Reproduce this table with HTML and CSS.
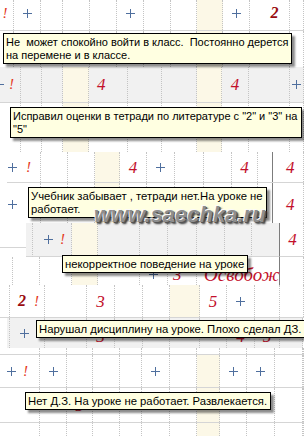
FILE: index.html
```html
<!DOCTYPE html>
<html>
<head>
<meta charset="utf-8">
<link rel="stylesheet" href="styles.css">
</head>
<body>
<div class="page">
  <!-- strip A -->
  <div class="row ra h31 bb up">
    <div class="c"><i class="ex mr3">!</i></div>
    <div class="c"><i class="pl"></i></div>
    <div class="c"></div><div class="c"></div><div class="c"></div>
    <div class="c"><i class="pl"></i></div>
    <div class="c"></div><div class="c"></div>
    <div class="c cr"></div>
    <div class="c"><i class="pl"></i></div>
    <div class="c"><b class="g2 ml10">2</b></div>
    <div class="c"></div>
  </div>
  <div class="row ra h36">
    <div class="c"></div><div class="c"></div><div class="c"></div><div class="c"></div>
    <div class="c"></div><div class="c"></div><div class="c"></div><div class="c"></div>
    <div class="c cr"></div><div class="c"></div><div class="c"></div><div class="c"></div>
  </div>

  <!-- strip B -->
  <div class="row rb h36 bb gy">
    <div class="c l"><i class="pl mln5"></i><i class="ex ml5">!</i></div>
    <div class="c"></div><div class="c"></div>
    <div class="c cr"></div>
    <div class="c l"><b class="g ml8">4</b></div>
    <div class="c"></div><div class="c"></div>
    <div class="c cr"></div>
    <div class="c"><b class="g">4</b></div>
    <div class="c"></div>
    <div class="c l"><i class="pl ml2"></i></div>
  </div>
  <div class="row rb h49">
    <div class="c"></div><div class="c"></div><div class="c"></div>
    <div class="c cr"></div>
    <div class="c"></div><div class="c"></div><div class="c"></div>
    <div class="c cr"></div>
    <div class="c"></div><div class="c"></div><div class="c"></div>
  </div>

  <!-- strip C -->
  <div class="sc">
    <div class="row rc h31 bb">
      <div class="c l"><i class="pl ml1"></i><i class="ex ml9">!</i></div>
      <div class="c"></div><div class="c"></div>
      <div class="c cr"></div>
      <div class="c"><b class="g">4</b></div>
      <div class="c"><i class="pl"></i></div>
      <div class="c"></div><div class="c"></div>
      <div class="c"><b class="g">4</b></div>
      <div class="c dk"></div>
      <div class="c l"><b class="g ml13">4</b></div>
    </div>
    <div class="row rc h40 dn">
      <div class="c l"><i class="pl ml1"></i></div>
      <div class="c"></div><div class="c"></div>
      <div class="c cr"></div>
      <div class="c"></div><div class="c"></div><div class="c"></div>
      <div class="c"></div><div class="c"></div>
      <div class="c dk"></div>
      <div class="c l"><b class="g ml13">4</b></div>
    </div>
  </div>

  <!-- strip D -->
  <div class="row rd1 h34">
    <div class="c lf"></div>
    <div class="c gy cb"></div>
    <div class="c gy cb"><i class="pl ml5"></i><i class="ex ml7">!</i></div>
    <div class="c cr cb"></div>
    <div class="c gy cb"></div>
    <div class="c gy cb"></div>
    <div class="c gy cb"></div>
    <div class="c gy cb"></div>
    <div class="c gy cb"></div>
    <div class="c gy cb dk"></div>
    <div class="c cb"><b class="g ml2">4</b></div>
  </div>
  <div class="row rd2 h28 dn2">
    <div class="c"></div><div class="c"></div><div class="c"></div>
    <div class="c cr"></div>
    <div class="c"></div>
    <div class="c"><i class="pl"></i></div>
    <div class="c l"><b class="g ml5">3</b></div>
    <div class="c l dk"><span class="os">Освобож</span></div>
    <div class="c"></div>
  </div>

  <!-- strip E -->
  <div class="row re h33 bb">
    <div class="c"></div>
    <div class="c l"><b class="g2 ml8">2</b><i class="ex ml8">!</i></div>
    <div class="c"></div>
    <div class="c"><b class="g">3</b></div>
    <div class="c"></div><div class="c"></div>
    <div class="c cr"></div>
    <div class="c"><b class="g">5</b></div>
    <div class="c"><i class="pl"></i></div>
    <div class="c"></div><div class="c"></div>
  </div>
  <div class="row re2 h30 gy">
    <div class="c"></div>
    <div class="c l"><i class="pl ml10"></i></div>
    <div class="c"></div>
    <div class="c dn3"><b class="g">3</b></div>
    <div class="c"></div><div class="c"></div><div class="c"></div>
    <div class="c"></div>
    <div class="c dn3"><b class="g">4</b></div>
    <div class="c dn3"><b class="g">5</b></div>
    <div class="c"></div>
  </div>

  <!-- strip F -->
  <div class="row rf h7 bb">
    <div class="c"></div><div class="c"></div><div class="c"></div><div class="c"></div>
    <div class="c"></div><div class="c"></div><div class="c"></div><div class="c"></div>
    <div class="c"></div><div class="c"></div><div class="c"></div><div class="c"></div>
  </div>
  <div class="row rf h33 bb">
    <div class="c l"><i class="pl ml7"></i><i class="ex ml7">!</i></div>
    <div class="c"><i class="pl"></i></div>
    <div class="c"></div><div class="c"></div><div class="c"></div>
    <div class="c"><i class="pl"></i></div>
    <div class="c"></div>
    <div class="c cr"></div>
    <div class="c"><i class="pl"></i></div>
    <div class="c"><i class="pl"></i></div>
    <div class="c"></div><div class="c"></div>
  </div>
  <div class="row rf h35 bb">
    <div class="c"></div>
    <div class="c"><i class="pl"></i></div>
    <div class="c"><b class="g">5</b></div>
    <div class="c"></div><div class="c"></div><div class="c"></div><div class="c"></div>
    <div class="c cr"></div>
    <div class="c"></div>
    <div class="c"><i class="pl"></i></div>
    <div class="c"></div><div class="c"></div>
  </div>
  <div class="row rf h13">
    <div class="c"></div><div class="c"></div><div class="c"></div><div class="c"></div>
    <div class="c"></div><div class="c"></div><div class="c"></div><div class="c cr"></div>
    <div class="c"></div><div class="c"></div><div class="c"></div><div class="c"></div>
  </div>

  <div class="tip t1">Не&nbsp; может спокойно войти в класс.&nbsp; Постоянно дерется<br>на перемене и в классе.</div>
  <div class="tip t2">Исправил оценки в тетради по литературе с "2" и "3" на<br>"5"</div>
  <div class="tip t3">Учебник забывает , тетради нет.На уроке не<br>работает.</div>
  <div class="tip t4">некорректное поведение на уроке</div>
  <div class="tip t5">Нарушал дисциплину на уроке. Плохо сделал ДЗ.</div>
  <div class="tip t6">Нет Д.З. На уроке не работает. Развлекается.</div>

  <div class="wm">www.saechka.ru</div>
</div>
</body>
</html>
```

FILE: styles.css
```css
html, body { margin: 0; padding: 0; overflow: hidden; background: #fff; }
.page {
  position: relative;
  width: 304px;
  height: 436px;
  overflow: hidden;
  background: #fff;
  font-family: "Liberation Sans", Arial, sans-serif;
}
.row { display: grid; box-sizing: border-box; }
.h7 { height: 7px; } .h13 { height: 13px; } .h28 { height: 28px; } .h30 { height: 30px; }
.h31 { height: 31px; } .h33 { height: 33px; } .h34 { height: 34px; } .h35 { height: 35px; }
.h36 { height: 36px; } .h40 { height: 40px; } .h49 { height: 49px; }
.bb { border-bottom: 1px solid #d5d5d5; }
.gy { background: #f1f1f1; }

.ra { grid-template-columns: 14px 27px 22px 27px 27px 27px 27px 26px 26px 27px 40px 14px; }
.rb { grid-template-columns: 21px 21px 21px 26px 39px 34px 35px 25px 27px 41px 14px; }
.sc { margin-left: 7px; }
.rc { grid-template-columns: 34px 27px 27px 25px 27px 28px 29px 28px 26px 15px 31px; }
.rd1 { grid-template-columns: 26px 7px 39px 26px 42px 28px 29px 28px 27px 28px 24px; }
.rd2 { grid-template-columns: 13px 27px 32px 26px 42px 28px 29px 83px 24px; }
.re { grid-template-columns: 10px 35px 42px 28px 28px 27px 30px 27px 28px 25px 24px; }
.re2 { margin: 0 1px 0 7px; grid-template-columns: 3px 35px 42px 28px 28px 27px 30px 27px 28px 25px 23px; }
.rf { grid-template-columns: 40px 27px 26px 27px 22px 28px 27px 23px 27px 28px 28px 1px; }

.c {
  display: flex;
  align-items: center;
  justify-content: center;
  box-sizing: border-box;
  min-width: 0;
  border-right: 1px dotted #c4c4c4;
  white-space: nowrap;
}
.c.l { justify-content: flex-start; }
.c.dk { border-right: 1px solid #7c7c7c; }
.cr { background: #fcf8e7; }
.cb { border-bottom: 1px solid #d5d5d5; }
.lf {
  border-right: none;
  background: linear-gradient(#d5d5d5, #d5d5d5) 0 24px / 100% 1px no-repeat, #fff;
}
.up .c { padding-bottom: 4px; }
.dn .c { padding-top: 2px; }
.dn2 .c { padding-top: 7px; }
.dn3 { padding-top: 6px; }

.pl {
  display: inline-block;
  flex: none;
  width: 9px;
  height: 9px;
  background:
    linear-gradient(#4f6f9e, #4f6f9e) 4px 0 / 1px 9px no-repeat,
    linear-gradient(#4f6f9e, #4f6f9e) 0 4px / 9px 1px no-repeat;
}
.g { font: italic 17px/1 "Liberation Serif", serif; color: #c3102b; }
.g2 { font: bold italic 16px/1 "Liberation Serif", serif; color: #9a0c10; }
.ex { font: italic 15px/1 "Liberation Serif", serif; color: #e4381a; }
.os { font: italic 19px/1 "Liberation Serif", serif; color: #c3102b; margin-left: 7px; }

.ml1 { margin-left: 1px; } .ml2 { margin-left: 2px; } .ml5 { margin-left: 5px; }
.ml7 { margin-left: 7px; } .ml8 { margin-left: 8px; } .ml9 { margin-left: 9px; }
.ml10 { margin-left: 10px; } .ml13 { margin-left: 13px; } .mln5 { margin-left: -5px; }
.mr3 { margin-right: 3px; }

.wm {
  position: absolute;
  left: 94px;
  top: 203px;
  font: bold italic 22px/24px "Liberation Sans", Arial, sans-serif;
  color: #8e8e8e;
  text-shadow: -1px -1px 0 #fafafa, 1px 1px 0 #555, 2px 2px 2px #333;
}

.tip {
  position: absolute;
  background: #ffffe1;
  border: 1px solid #000;
  box-shadow: 3px 3px 2px rgba(0, 0, 0, 0.45);
  font: 11.3px/13px "Liberation Sans", Arial, sans-serif;
  color: #000;
  padding: 2px 3px 1px 2px;
  white-space: nowrap;
}
.t1 { left: 3px; top: 33px; font-size: 11px; }
.t2 { left: 10px; top: 107px; font-size: 11px; }
.t3 { left: 28px; top: 187px; }
.t4 { left: 62px; top: 255px; }
.t5 { left: 36px; top: 320px; }
.t6 { left: 25px; top: 392px; }
```
